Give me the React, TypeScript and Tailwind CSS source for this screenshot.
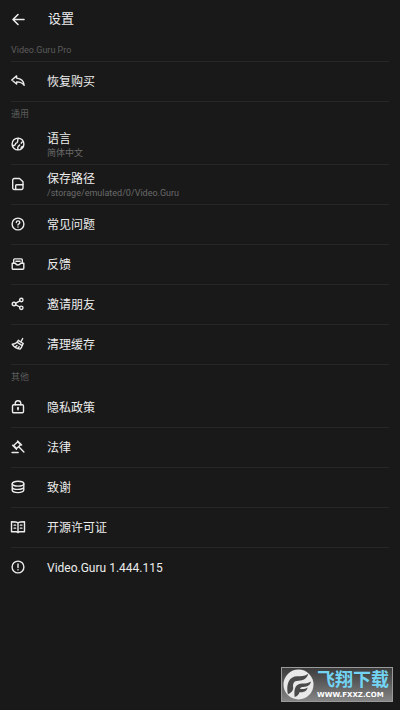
import type { ReactNode } from "react";

function Icon({ children }: { children: ReactNode }) {
  return (
    <svg
      viewBox="0 0 14 15"
      className="h-[15px] w-3.5 shrink-0 overflow-visible"
      fill="none"
      stroke="currentColor"
      strokeWidth="1.4"
      strokeLinecap="round"
      strokeLinejoin="round"
      aria-hidden="true"
    >
      {children}
    </svg>
  );
}

const icons = {
  restore: (
    <Icon>
      <path d="M5.6 1.9 0.8 6l4.8 4V7.9c3.300-.1 5.600.8 7.600 3.400-.4-4.100-3.200-6.800-7.600-7.200Z" />
    </Icon>
  ),
  globe: (
    <Icon>
      <circle cx="7" cy="7" r="5.900" />
      <path d="M1.400 8.300c1.500.6 2.700.2 3-1.200.2-1.100 1.300-1 1.900-1.800.7-1 .1-2.400.9-3.900M12.500 5c-1.300-.5-2.100.2-2.200 1.300M10.200 11.600c-.3-1.300.6-2.200 2.100-2.100M6.800 12.500c.2-1.300-.4-2 .3-2.900.5-.7 1.300-.8 1.500-1.600" />
    </Icon>
  ),
  save: (
    <Icon>
      <path d="M3.200 1.500h5.300l3.500 3.300v6.200a1.500 1.500 0 0 1-1.500 1.500H3.200a1.500 1.500 0 0 1-1.500-1.500V3a1.500 1.500 0 0 1 1.500-1.500Z" />
      <path d="M4.700 12.300V8.600c0-.6.3-.9.900-.9H12" />
    </Icon>
  ),
  help: (
    <Icon>
      <circle cx="7" cy="7" r="5.900" />
      <path d="M5.300 5.600c0-2.300 3.500-2.200 3.500-.1C8.800 6.800 7 6.800 7 8M7 10v.1" />
    </Icon>
  ),
  feedback: (
    <Icon>
      <path d="M2.700 6V2.900c0-.6.400-1 1-1h6.600c.6 0 1 .4 1 1V6M4.900 4.300h4.200" />
      <path d="M1.200 6.200h3.300c.3 2.300 4.700 2.300 5 0h3.300v5a1 1 0 0 1-1 1H2.200a1 1 0 0 1-1-1Z" />
    </Icon>
  ),
  share: (
    <Icon>
      <circle cx="3" cy="7" r="1.800" />
      <circle cx="10.300" cy="3" r="1.700" />
      <circle cx="10.300" cy="10.800" r="1.700" />
      <path d="m4.800 6.100 4-2.200M4.800 7.900l4 2.100" />
    </Icon>
  ),
  clean: (
    <Icon>
      <path d="m11.700 1.500-1.500 2.800M7.300 3.300l4.900 3.200M7.300 3.300 6 5.200l5.200 3.500 1-2.200M6 5.200C4.700 6.400 3 7 1.300 7.300c1.700 2.600 4.300 4.300 7.900 4.700 1-.9 1.700-2 2-3.300M4.300 9.900l1.700-1.500M6.900 11.300l1.300-1.600" />
    </Icon>
  ),
  lock: (
    <Icon>
      <rect x="1.500" y="4.800" width="11" height="8" rx="1.200" />
      <path d="M4.200 4.800V3.500a2.800 2.800 0 0 1 5.600 0v1.300M7 8.200v1.700" />
      <circle cx="7" cy="8.200" r=".4" />
    </Icon>
  ),
  law: (
    <Icon>
      <path d="m2.700 5.600 4-3.800 2.900 3-4 3.800ZM1.600 5.200l3.900 4M6.600 1l4 4M8 6.900l4.900 5" />
      <path d="M1.100 12.500h6" strokeWidth="1.600" />
    </Icon>
  ),
  thanks: (
    <Icon>
      <ellipse cx="7" cy="3.700" rx="5.800" ry="2.400" />
      <path d="M1.200 3.700v6.400c0 3.300 11.600 3.300 11.600 0V3.700M1.200 6.900c0 3.300 11.600 3.300 11.600 0" />
    </Icon>
  ),
  book: (
    <Icon>
      <path d="M7 2.900C5.900 2 4.500 1.700.5 1.700v10h4.700c.8 0 1.400.3 1.800.9.400-.6 1-.9 1.800-.9h4.700v-10c-4 0-5.400.3-6.500 1.200ZM7 2.900v9.500" />
      <path d="M3 5.200h1.700M3 8.200h1.700M9.300 5.200H11M9.300 8.200H11" strokeWidth="1.200" />
    </Icon>
  ),
  info: (
    <Icon>
      <circle cx="7" cy="7" r="5.900" />
      <path d="M7 4v3.500M7 9.800v.1" />
    </Icon>
  ),
};

type Item = { icon: ReactNode; title: string; detail?: string };

const sections: { name: string; items: Item[] }[] = [
  { name: "Video.Guru Pro", items: [{ icon: icons.restore, title: "恢复购买" }] },
  {
    name: "通用",
    items: [
      { icon: icons.globe, title: "语言", detail: "简体中文" },
      { icon: icons.save, title: "保存路径", detail: "/storage/emulated/0/Video.Guru" },
      { icon: icons.help, title: "常见问题" },
      { icon: icons.feedback, title: "反馈" },
      { icon: icons.share, title: "邀请朋友" },
      { icon: icons.clean, title: "清理缓存" },
    ],
  },
  {
    name: "其他",
    items: [
      { icon: icons.lock, title: "隐私政策" },
      { icon: icons.law, title: "法律" },
      { icon: icons.thanks, title: "致谢" },
      { icon: icons.book, title: "开源许可证" },
      { icon: icons.info, title: "Video.Guru 1.444.115" },
    ],
  },
];

function Row({ icon, title, detail }: Item) {
  return (
    <li className="border-b border-[#272727] last:group-last:border-transparent">
      <button type="button" className="flex h-[39px] w-full items-center gap-[22px] text-left">
        {icon}
        <span className={detail ? "flex flex-col pt-0.5" : "flex flex-col"}>
          <span className="text-xs leading-4">{title}</span>
          {detail && <span className="text-[9px] leading-[13px] text-[#6a6a6a]">{detail}</span>}
        </span>
      </button>
    </li>
  );
}

function Watermark() {
  return (
    <div className="fixed right-[7px] bottom-2 flex h-[35px] w-28 items-center gap-[3px] border border-[#9a9a9a] bg-linear-to-b from-[#3c3c3c] to-[#858585] pl-px">
      <svg viewBox="0 0 32 32" className="size-[31px] shrink-0" aria-hidden="true">
        <circle cx="16" cy="16" r="15.500" fill="#e9e9e9" />
        <path d="M5 26C3 16 6 7.500 15 7.500c4 0 7 .5 11-2.500-1 5-5 7-10 7-5 0-6 3-5.500 7 .3 3-2 5.500-5.500 7Z" fill="#4a4a4a" />
        <path d="M12 29c-1-9 1-14 8-14 3 0 6 0 9-2-1 4-4 5.500-8 5.500-2 0-3 .5-3.500 2 3 .5 5.500 0 8-1.500-1 4-4 5-8.500 5-.5 2-2 4-5 5Z" fill="#4a4a4a" />
      </svg>
      <div className="flex flex-col items-start pt-px">
        <span className="text-lg leading-5 font-bold whitespace-nowrap text-[#72d3f2]">飞翔下载</span>
        <span className="font-['DejaVu_Sans',sans-serif] text-[7px] leading-[10px] font-bold text-white">WWW.FXXZ.COM</span>
      </div>
    </div>
  );
}

export default function App() {
  return (
    <div className="min-h-screen bg-[#191919] px-[11px] font-[Roboto,'Noto_Sans_CJK_SC',sans-serif] text-[#ececec]">
      <header className="flex h-[38px] items-center gap-[23px]">
        <button type="button" aria-label="返回">
          <Icon>
            <path d="M13 7.500H2.500M7 2.500l-5 5 5 5" strokeWidth="1.600" />
          </Icon>
        </button>
        <h1 className="text-[13px] leading-4">设置</h1>
      </header>
      <main>
        {sections.map((section) => (
          <section key={section.name} className="group">
            <h2 className="flex h-[23px] items-center pt-0.5 text-[9px] text-[#5c5c5c] group-first:h-6 group-first:border-b group-first:border-[#272727]">
              {section.name}
            </h2>
            <ul>
              {section.items.map((item) => (
                <Row key={item.title} {...item} />
              ))}
            </ul>
          </section>
        ))}
      </main>
      <Watermark />
    </div>
  );
}
